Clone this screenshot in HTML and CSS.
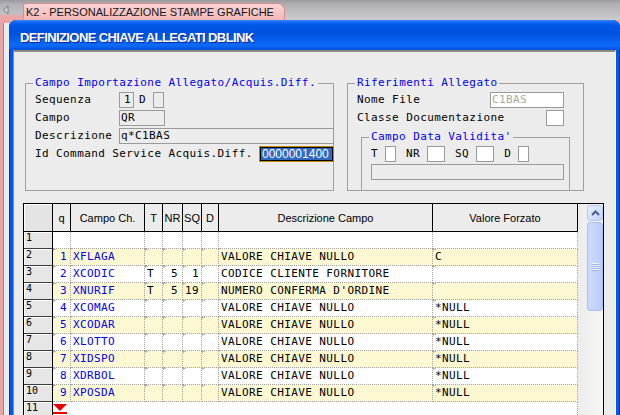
FILE: index.html
```html
<!DOCTYPE html>
<html>
<head>
<meta charset="utf-8">
<title>K2</title>
<link rel="stylesheet" href="styles.css">
</head>
<body>
<div class="tabbar">
  <div class="tab-lead"><svg width="7" height="10" viewBox="0 0 7 10"><polygon points="6,1 1.5,5 6,9" fill="#D6D6D6" stroke="#7C7C7C" stroke-width="1"/></svg></div>
  <div class="tab">K2 - PERSONALIZZAZIONE STAMPE GRAFICHE</div>
</div>
<div class="page">
  <div class="page-strip"></div>
  <div class="window">
    <div class="titlebar">DEFINIZIONE CHIAVE ALLEGATI DBLINK</div>
    <div class="client">
      <div class="groups">
        <div class="group g-left">
          <div class="legend">Campo Importazione Allegato/Acquis.Diff.</div>
          <div class="frow first">
            <span class="lbl w84">Sequenza</span>
            <span class="fld w15 right">1</span>
            <span class="lbl ml5">D</span>
            <span class="fld w11 ml7"></span>
          </div>
          <div class="frow">
            <span class="lbl w84">Campo</span>
            <span class="fld w46">QR</span>
          </div>
          <div class="frow">
            <span class="lbl w84">Descrizione</span>
            <span class="fld w215 flush">q*C1BAS</span>
          </div>
          <div class="frow">
            <span class="lbl">Id Command Service Acquis.Diff.</span>
            <span class="fld idfld flush">0000001400</span>
          </div>
        </div>
        <div class="group g-right">
          <div class="legend">Riferimenti Allegato</div>
          <div class="frow first">
            <span class="lbl">Nome File</span>
            <span class="fld white w74 auto dim">C1BAS</span>
          </div>
          <div class="frow">
            <span class="lbl">Classe Documentazione</span>
            <span class="fld white w18 auto"></span>
          </div>
          <div class="group g-inner">
            <div class="legend">Campo Data Validita'</div>
            <div class="frow first">
              <span class="lbl">T</span>
              <span class="fld white w11 ml7"></span>
              <span class="lbl ml10">NR</span>
              <span class="fld white w18 ml7"></span>
              <span class="lbl ml10">SQ</span>
              <span class="fld white w18 ml7"></span>
              <span class="lbl ml10">D</span>
              <span class="fld white w11 ml7"></span>
            </div>
            <div class="frow">
              <span class="fld w193"></span>
            </div>
          </div>
        </div>
      </div>

      <div class="grid">
        <div class="tbl">
          <div class="hrow">
            <div class="rn"></div><div>q</div><div>Campo Ch.</div><div>T</div><div>NR</div><div>SQ</div><div>D</div><div>Descrizione Campo</div><div>Valore Forzato</div>
          </div>
          <div class="row">
            <div class="rn">1</div><div></div><div></div><div></div><div></div><div></div><div></div><div></div><div></div>
          </div>
          <div class="row y t">
            <div class="rn">2</div><div class="q b">1</div><div class="b">XFLAGA</div><div></div><div class="nr"></div><div class="sq"></div><div></div><div>VALORE CHIAVE NULLO</div><div>C</div>
          </div>
          <div class="row t">
            <div class="rn">3</div><div class="q b">2</div><div class="b">XCODIC</div><div>T</div><div class="nr">5</div><div class="sq">1</div><div></div><div>CODICE CLIENTE FORNITORE</div><div></div>
          </div>
          <div class="row y t">
            <div class="rn">4</div><div class="q b">3</div><div class="b">XNURIF</div><div>T</div><div class="nr">5</div><div class="sq">19</div><div></div><div>NUMERO CONFERMA D'ORDINE</div><div></div>
          </div>
          <div class="row t">
            <div class="rn">5</div><div class="q b">4</div><div class="b">XCOMAG</div><div></div><div class="nr"></div><div class="sq"></div><div></div><div>VALORE CHIAVE NULLO</div><div>*NULL</div>
          </div>
          <div class="row y t">
            <div class="rn">6</div><div class="q b">5</div><div class="b">XCODAR</div><div></div><div class="nr"></div><div class="sq"></div><div></div><div>VALORE CHIAVE NULLO</div><div>*NULL</div>
          </div>
          <div class="row t">
            <div class="rn">7</div><div class="q b">6</div><div class="b">XLOTTO</div><div></div><div class="nr"></div><div class="sq"></div><div></div><div>VALORE CHIAVE NULLO</div><div>*NULL</div>
          </div>
          <div class="row y t">
            <div class="rn">8</div><div class="q b">7</div><div class="b">XIDSPO</div><div></div><div class="nr"></div><div class="sq"></div><div></div><div>VALORE CHIAVE NULLO</div><div>*NULL</div>
          </div>
          <div class="row t">
            <div class="rn">9</div><div class="q b">8</div><div class="b">XDRBOL</div><div></div><div class="nr"></div><div class="sq"></div><div></div><div>VALORE CHIAVE NULLO</div><div>*NULL</div>
          </div>
          <div class="row y t">
            <div class="rn">10</div><div class="q b">9</div><div class="b">XPOSDA</div><div></div><div class="nr"></div><div class="sq"></div><div></div><div>VALORE CHIAVE NULLO</div><div>*NULL</div>
          </div>
          <div class="row last">
            <div class="rn">11</div>
            <div class="mk"><svg width="15" height="12" viewBox="0 0 15 12"><polygon points="0,1 14,1 7,8" fill="#E80000"/><rect x="0" y="9" width="14" height="2" fill="#E80000"/></svg></div>
            <div></div><div></div><div></div><div></div><div></div><div></div><div></div>
          </div>
        </div>
        <div class="side">
          <div class="sb">
            <div class="sb-btn"><svg width="9" height="6" viewBox="0 0 9 6"><polyline points="1,5 4.5,1.5 8,5" fill="none" stroke="#4A5F8C" stroke-width="2"/></svg></div>
            <div class="sb-thumb"><div class="grip"></div></div>
          </div>
        </div>
      </div>
    </div>
  </div>
</div>
</body>
</html>
```
FILE: styles.css
```css
* { box-sizing: border-box; }
html, body { margin: 0; padding: 0; }
body {
  width: 620px;
  height: 415px;
  overflow: hidden;
  background: #C4C4C8;
  font-family: "Liberation Sans", Arial, sans-serif;
}

/* ---------- tab strip ---------- */
.tabbar {
  height: 20px;
  display: flex;
  background: linear-gradient(#9A9A9C, #B0B0B4 20%, #C2C2C6 70%, #CBCBCF);
}
.tab-lead {
  width: 23px;
  flex-shrink: 0;
  padding: 5px 0 0 2px;
  background: linear-gradient(to bottom, transparent 15px, #E9A6A6 15px);
}
.tab-lead svg { display: block; }
.tab {
  width: 262px;
  flex-shrink: 0;
  margin-top: 3px;
  padding: 2px 0 0 2px;
  background: linear-gradient(#FBD4D4, #F3B6B6);
  border: 1px solid #CF9090;
  border-bottom: 0;
  border-radius: 3px 7px 0 0;
  font-size: 11px;
  line-height: 12px;
  color: #151515;
  white-space: nowrap;
}

/* ---------- page / window ---------- */
.page {
  display: flex;
  height: 395px;
  background: #E9A6A6;
  padding-left: 3px;
}
.page-strip {
  width: 6px;
  flex-shrink: 0;
  margin-top: 3px;
  background: #ECECEC;
  border-left: 1px solid #8A8A8A;
}
.window {
  flex: 1;
  display: flex;
  flex-direction: column;
  background: #0856E6;
  box-shadow: inset 1px 0 #0032BC, inset -1px 0 #0032BC;
  border-radius: 8px 8px 0 0;
  overflow: hidden;
}
.titlebar {
  height: 30px;
  flex-shrink: 0;
  padding: 5px 0 0 11px;
  line-height: 25px;
  color: #fff;
  font-weight: bold;
  font-size: 13px;
  letter-spacing: -0.6px;
  white-space: nowrap;
  text-shadow: 1px 1px 0 #0A2A9A;
  background: linear-gradient(#3C8AFA 0, #1468F4 2px, #0058E8 5px, #0052DE 45%, #0A62F2 72%, #0D6AF8 85%, #0050DC 100%);
}
.client {
  flex: 1;
  margin: 0 4px;
  background: #ECECEC;
  border-top: 2px solid #8C8C80;
  border-left: 1px solid #8C8C80;
  border-right: 1px solid #fff;
  padding: 31px 0 0 11px;
  font-family: "DejaVu Sans Mono", monospace;
  font-size: 11px;
  letter-spacing: 0.4px;
  color: #000;
  overflow: hidden;
}

/* ---------- group boxes ---------- */
.groups { display: flex; align-items: flex-start; }
.group {
  border: 1px solid #A0A0A0;
  display: flex;
  flex-direction: column;
  flex-shrink: 0;
}
.g-left { width: 309px; height: 108px; padding: 0 0 0 9px; }
.g-right { width: 237px; height: 108px; margin-left: 13px; padding: 0 19px 0 9px; }
.g-inner {
  width: 209px;
  flex: 1;
  margin: 11px 0 0 4px;
  border-bottom: 0;
  padding: 0 0 0 9px;
}
.legend {
  align-self: flex-start;
  margin: -8px 0 0 -2px;
  padding: 0 2px;
  height: 13px;
  line-height: 13px;
  background: #ECECEC;
  color: #0000EE;
  white-space: nowrap;
}
.frow {
  display: flex;
  align-items: center;
  height: 16px;
  margin-top: 2px;
  white-space: nowrap;
}
.frow.first { margin-top: 3px; }
.lbl { line-height: 16px; flex-shrink: 0; }
.w84 { width: 84px; }
.ml5 { margin-left: 5px; }
.ml7 { margin-left: 7px; }
.ml10 { margin-left: 10px; }
.fld {
  height: 16px;
  flex-shrink: 0;
  border: 1px solid #9A9A9A;
  line-height: 14px;
  padding: 0 1px;
  overflow: hidden;
  white-space: nowrap;
}
.fld.white { background: #fff; }
.fld.right { text-align: right; padding-right: 2px; }
.fld.dim { color: #A8A8A0; }
.fld.auto { margin-left: auto; }
.fld.flush { margin-right: -1px; }
.w11 { width: 11px; }
.w15 { width: 15px; }
.w18 { width: 18px; }
.w46 { width: 46px; }
.w74 { width: 74px; }
.w193 { width: 193px; }
.w215 { width: 215px; }
.idfld {
  width: 75px;
  margin-left: auto;
  border: 1px solid #C88A00;
  box-shadow: inset 0 0 0 1px #000;
  background: #316AC5;
  color: #fff;
  font-family: "Liberation Sans", Arial, sans-serif;
  font-size: 12px;
  letter-spacing: 0;
  padding-left: 2px;
}

/* ---------- grid ---------- */
.grid {
  margin: 12px 0 0 -2px;
  width: 581px;
  height: 230px;
  border: 1px solid #000;
  border-bottom: 0;
  display: flex;
  background: #fff;
}
.tbl { width: 554px; flex-shrink: 0; }
.hrow, .row {
  display: grid;
  grid-template-columns: 29px 18px 74px 18px 20px 19px 17px 214px 145px;
}
.hrow { height: 28px; }
.hrow > div {
  border-right: 1px solid #000;
  border-bottom: 1px solid #000;
  background: #ECECEC;
  display: flex;
  align-items: center;
  justify-content: center;
  font-family: "Liberation Sans", Arial, sans-serif;
  font-size: 11px;
  letter-spacing: 0;
  white-space: nowrap;
}
.hrow > .rn { background: #E4E4E4; box-shadow: inset 1px 1px 0 #fff; }
.row { height: 17px; }
.row > div {
  border-right: 1px dotted #A0A0A0;
  border-bottom: 1px dotted #A0A0A0;
  line-height: 16px;
  padding: 0 2px;
  white-space: nowrap;
  overflow: hidden;
}
.row.y > div:not(.rn) { background-color: #FBF8D2; }
.row.t > div:is(:nth-child(2), :nth-child(4), :nth-child(5), :nth-child(6), :nth-child(7), :nth-child(9)) {
  background-image: linear-gradient(#B8B8B8, #B8B8B8), linear-gradient(#B8B8B8, #B8B8B8);
  background-size: 3px 1px, 1px 2px;
  background-position: 0 0, 0 0;
  background-repeat: no-repeat;
}
.row > .rn {
  background: #E6E6E6;
  border-right: 1px solid #000;
  border-bottom: 1px solid #3C3C3C;
  box-shadow: inset 1px 1px 0 #fff;
  font-size: 10px;
  line-height: 12px;
  letter-spacing: 0;
  padding: 0 0 0 2px;
}
.row.last > div:not(.rn) { border-right-color: transparent; border-bottom-color: transparent; }
.row.last > div:last-child { border-right-color: #A0A0A0; }
.row > .q { text-align: right; padding-right: 3px; }
.row > .nr { text-align: right; padding-right: 4px; }
.row > .sq { text-align: right; padding-right: 2px; }
.b { color: #0000EE; }
.row > .mk { padding: 1px 0 0 0; }
.mk svg { display: block; }

/* ---------- scrollbar ---------- */
.side {
  width: 25px;
  flex-shrink: 0;
  background: linear-gradient(to right, #ECECEC, #F7F7F5);
  padding: 1px 0 0 9px;
}
.sb { width: 16px; display: flex; flex-direction: column; gap: 1px; }
.sb-btn {
  height: 16px;
  border: 1px solid #B6C9F5;
  border-radius: 3px;
  background: linear-gradient(135deg, #E8EFFF, #C2D3FB);
  display: flex;
  align-items: center;
  justify-content: center;
}
.sb-btn svg { display: block; }
.sb-thumb {
  height: 89px;
  border: 1px solid #A9BFF2;
  border-radius: 3px;
  background: linear-gradient(to right, #CCDAFD, #B9CCFA);
  display: flex;
  align-items: center;
  justify-content: center;
}
.grip {
  width: 7px;
  height: 8px;
  background: repeating-linear-gradient(#EEF3FF 0 1px, #9FB5E8 1px 2px);
}
```
